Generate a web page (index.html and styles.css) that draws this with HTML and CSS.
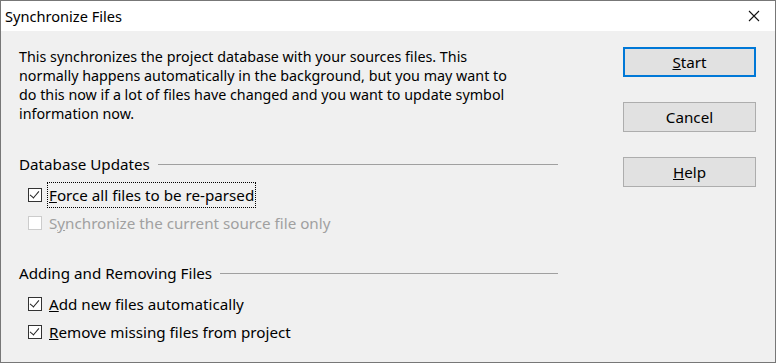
FILE: index.html
```html
<!DOCTYPE html>
<html lang="en">
<head>
  <meta charset="UTF-8">
  <title>Synchronize Files</title>
  <link rel="stylesheet" href="styles.css">
</head>
<body>
  <div class="window">
    <div class="titlebar">
      <span class="title">Synchronize Files</span>
      <svg class="close" width="12" height="12" viewBox="0 0 12 12">
        <path d="M1 1 L11 11 M11 1 L1 11" stroke="#111" stroke-width="1.1" fill="none"/>
      </svg>
    </div>

    <div class="content">
      <div class="main">
        <p class="intro">This synchronizes the project database with your sources files. This normally happens automatically in the background, but you may want to do this now if a lot of files have changed and you want to update symbol information now.</p>

        <div class="group">
          <div class="group-head"><span>Database Updates</span><span class="rule"></span></div>
          <label class="check">
            <span class="box checked"></span>
            <span class="focus"><u>F</u>orce all files to be re-parsed</span>
          </label>
          <label class="check disabled">
            <span class="box"></span>
            <span>S<u>y</u>nchronize the current source file only</span>
          </label>
        </div>

        <div class="group second">
          <div class="group-head"><span>Adding and Removing Files</span><span class="rule"></span></div>
          <label class="check">
            <span class="box checked"></span>
            <span><u>A</u>dd new files automatically</span>
          </label>
          <label class="check">
            <span class="box checked"></span>
            <span><u>R</u>emove missing files from project</span>
          </label>
        </div>
      </div>

      <div class="buttons">
        <button class="btn default"><u>S</u>tart</button>
        <button class="btn">Cancel</button>
        <button class="btn"><u>H</u>elp</button>
      </div>
    </div>
  </div>
</body>
</html>
```

FILE: styles.css
```css
body {
  margin: 0;
  font-family: "Noto Sans", "Open Sans", sans-serif;
  font-size: 15.2px;
  color: #000;
}

.window {
  width: 776px;
  height: 363px;
  box-sizing: border-box;
  border: 1px solid #777;
  background: #f0f0f0;
}

.titlebar {
  height: 30px;
  background: #fff;
  display: flex;
  align-items: center;
  justify-content: space-between;
  padding: 0 15px 0 4px;
}

.title {
  font-size: 14.6px;
}

.content {
  display: flex;
  justify-content: space-between;
  padding: 16px 19px 0 18px;
}

.main {
  width: 539px;
}

.intro {
  margin: 0;
  width: 508px;
  font-size: 14.3px;
  line-height: 19px;
}

.group {
  margin-top: 31px;
}

.group.second {
  margin-top: 26px;
}

.group-head {
  display: flex;
  align-items: center;
  gap: 8px;
  height: 20px;
}

.rule {
  flex: 1;
  height: 1px;
  background: #a0a0a0;
}

.check {
  display: flex;
  align-items: center;
  gap: 7px;
  height: 28px;
  padding-left: 9px;
}

.group-head + .check {
  margin-top: 7px;
}

.box {
  width: 14px;
  height: 14px;
  box-sizing: border-box;
  border: 1px solid #333;
  background: #fff;
  position: relative;
}

.box.checked::after {
  content: "";
  position: absolute;
  left: 3px;
  top: 0px;
  width: 4px;
  height: 8px;
  border: solid #222;
  border-width: 0 1px 1px 0;
  transform: rotate(40deg);
}

.focus {
  outline: 1px dotted #000;
  padding: 2px 1px;
  margin-left: -1px;
}

.check.disabled {
  color: #a0a0a0;
}

.check.disabled .box {
  border-color: #cccccc;
}

.buttons {
  display: flex;
  flex-direction: column;
  gap: 25px;
}

.btn {
  width: 133px;
  height: 30px;
  box-sizing: border-box;
  border: 1px solid #adadad;
  background: #e1e1e1;
  font-family: inherit;
  font-size: 15.2px;
  color: #000;
  padding: 0;
}

.btn.default {
  border: 2px solid #0078d7;
}
```
